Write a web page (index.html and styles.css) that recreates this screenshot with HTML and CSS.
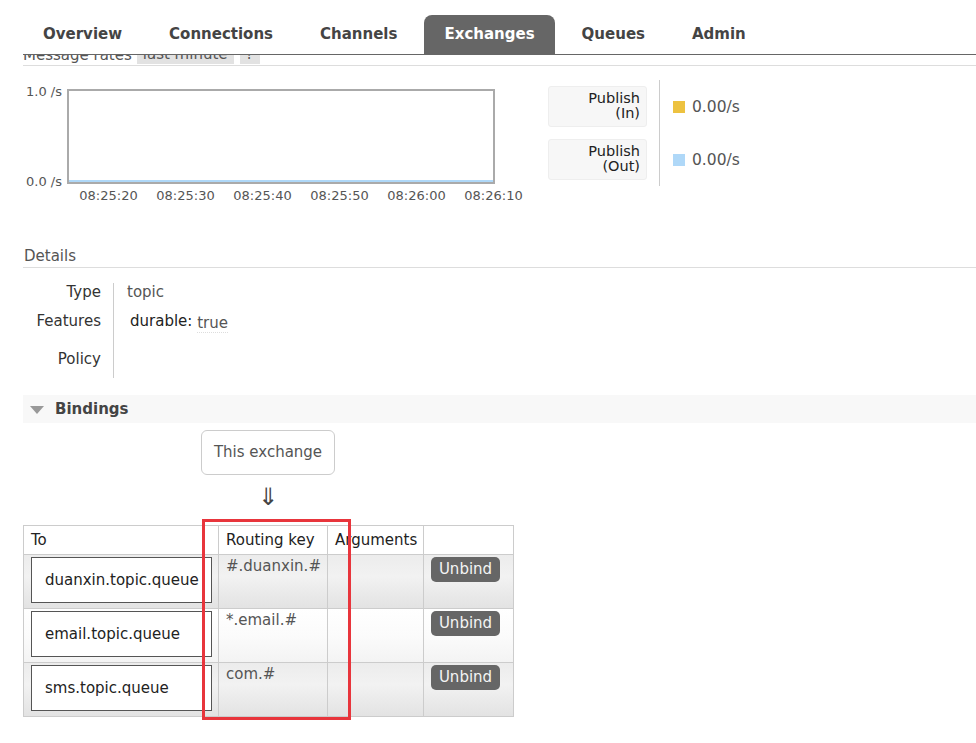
FILE: index.html
```html
<!DOCTYPE html>
<html>
<head>
<meta charset="utf-8">
<link rel="stylesheet" href="styles.css">
</head>
<body>
<div class="nav">
  <div class="tab">Overview</div>
  <div class="tab">Connections</div>
  <div class="tab">Channels</div>
  <div class="tab active">Exchanges</div>
  <div class="tab">Queues</div>
  <div class="tab">Admin</div>
</div>
<div class="main">
  <div class="rates-head">
    <div class="rates-head-inner">
      <span class="rh-title">Message rates</span>
      <span class="rh-chip rh-range">last minute</span>
      <span class="rh-chip rh-q">?</span>
    </div>
  </div>
  <div class="rates-body">
    <div class="chart">
      <div class="ylabels"><span>1.0 /s</span><span>0.0 /s</span></div>
      <div class="plot"><div class="plot-line"></div></div>
      <div></div>
      <div class="xlabels">
        <span>08:25:20</span><span>08:25:30</span><span>08:25:40</span><span>08:25:50</span><span>08:26:00</span><span>08:26:10</span>
      </div>
    </div>
    <div class="legend">
      <div class="legend-labels">
        <div class="legend-box">Publish<br>(In)</div>
        <div class="legend-box">Publish<br>(Out)</div>
      </div>
      <div class="legend-values">
        <div class="legend-val"><span class="sq sq-in"></span>0.00/s</div>
        <div class="legend-val"><span class="sq sq-out"></span>0.00/s</div>
      </div>
    </div>
  </div>

  <h2 class="section-title">Details</h2>
  <div class="details">
    <div class="d-label r1">Type</div><div class="d-val r1">topic</div>
    <div class="d-label r2">Features</div><div class="d-val r2 feat"><span class="feat-key">durable:</span> <span class="feat-val">true</span></div>
    <div class="d-label r3">Policy</div><div class="d-val r3"></div>
  </div>

  <div class="bindings-bar"><span class="tri"></span><span class="bindings-title">Bindings</span></div>
  <div class="flow">
    <div class="this-ex">This exchange</div>
    <div class="arrow">⇓</div>
  </div>
  <div class="table-wrap">
    <table class="bind-table">
      <thead>
        <tr><th class="c-to">To</th><th class="c-rk">Routing key</th><th class="c-args">Arguments</th><th class="c-act"></th></tr>
      </thead>
      <tbody>
        <tr class="alt1"><td class="c-to"><div class="qbox">duanxin.topic.queue</div></td><td class="rk">#.duanxin.#</td><td></td><td class="act"><span class="btn">Unbind</span></td></tr>
        <tr class="alt2"><td class="c-to"><div class="qbox">email.topic.queue</div></td><td class="rk">*.email.#</td><td></td><td class="act"><span class="btn">Unbind</span></td></tr>
        <tr class="alt1"><td class="c-to"><div class="qbox">sms.topic.queue</div></td><td class="rk">com.#</td><td></td><td class="act"><span class="btn">Unbind</span></td></tr>
      </tbody>
    </table>
    <div class="highlight"></div>
  </div>
</div>
</body>
</html>
```
FILE: styles.css
```css
* { box-sizing: border-box; }
body {
  margin: 0;
  font-family: "DejaVu Sans", Verdana, sans-serif;
  font-size: 15px;
  color: #333;
  background: #fff;
}
.nav {
  display: flex;
  margin-left: 23px;
  padding-top: 15px;
  border-bottom: 1px solid #666;
  height: 55px;
  gap: 7px;
}
.tab {
  height: 39px;
  padding: 0 20px;
  line-height: 39px;
  font-weight: bold;
  font-size: 15px;
  color: #444;
  border-radius: 8px 8px 0 0;
}
.tab.active { background: #666; color: #fff; }
.main { padding-left: 23px; padding-bottom: 24px; }

.rates-head {
  height: 11px;
  overflow: hidden;
  border-bottom: 1px solid #ddd;
}
.rates-head-inner {
  display: flex;
  align-items: flex-end;
  margin-top: -11px;
  height: 20px;
  font-size: 15px;
  color: #555;
}
.rh-title { line-height: 18px; padding-right: 5px; }
.rh-chip { background: #e2e2e2; padding: 0 6px; line-height: 20px; }
.rh-range { margin-right: 6px; }

.rates-body { display: flex; align-items: flex-start; padding-top: 14px; }
.chart {
  margin-left: 3px;
  width: 499px;
  padding-top: 9px;
  display: grid;
  grid-template-columns: 41px 428px;
  grid-template-rows: 95px auto;
  font-size: 13px;
  color: #555;
}
.ylabels {
  display: flex;
  flex-direction: column;
  justify-content: space-between;
  margin: -4px 0 -5px;
  line-height: 14px;
}
.plot {
  border: 2px solid #aaa;
  display: flex;
  align-items: flex-end;
}
.plot-line { height: 2px; width: 100%; background: #afd8f8; }
.xlabels {
  display: flex;
  margin-left: 3px;
  margin-top: 4px;
  line-height: 16px;
}
.xlabels span { width: 77px; text-align: center; flex: none; }

.legend { display: flex; margin-left: 23px; }
.legend-labels {
  padding: 6px 12px 6px 0;
  border-right: 1px solid #ccc;
  display: flex;
  flex-direction: column;
  gap: 12px;
}
.legend-box {
  width: 99px;
  height: 41px;
  background: #f7f7f7;
  border: 1px solid #eee;
  border-radius: 3px;
  text-align: right;
  padding: 4px 6px 0 0;
  line-height: 15px;
  font-size: 14.5px;
  color: #222;
}
.legend-values {
  padding: 6px 0 6px 13px;
  display: flex;
  flex-direction: column;
  gap: 12px;
}
.legend-val {
  height: 41px;
  display: flex;
  align-items: center;
  font-size: 15.5px;
  color: #555;
}
.sq { width: 12px; height: 12px; margin-right: 7px; display: inline-block; }
.sq-in { background: #edc240; }
.sq-out { background: #afd8f8; }

.section-title {
  margin: 42px 0 0;
  font-size: 15px;
  font-weight: normal;
  color: #555;
  line-height: 20px;
  padding: 0 0 1px 1px;
  border-bottom: 1px solid #ddd;
}
.details {
  margin-top: 15px;
  display: grid;
  grid-template-columns: 91px auto;
}
.d-label {
  text-align: right;
  padding-right: 12px;
  border-right: 1px solid #ccc;
  line-height: 18px;
  color: #333;
}
.d-val { padding-left: 13px; line-height: 18px; color: #555; }
.r1 { padding-bottom: 11px; }
.r2 { padding-bottom: 19px; }
.r3 { padding-bottom: 10px; }
.feat { padding-left: 16px; }
.feat-key { color: #222; }
.feat-val {
  display: inline-block;
  line-height: 17px;
  position: relative;
  top: 2px;
  border-bottom: 1px dotted #ddd;
  color: #555;
}

.bindings-bar {
  margin-top: 17px;
  height: 28px;
  background: #f8f8f8;
  display: flex;
  align-items: center;
}
.tri {
  width: 0; height: 0;
  border-left: 7px solid transparent;
  border-right: 7px solid transparent;
  border-top: 8px solid #999;
  margin: 1px 11px 0 7px;
}
.bindings-title { font-weight: bold; font-size: 15px; color: #444; }

.flow {
  margin: 7px 0 0 178px;
  width: 134px;
  display: flex;
  flex-direction: column;
  align-items: center;
}
.this-ex {
  width: 134px;
  height: 45px;
  border: 1px solid #ccc;
  border-radius: 6px;
  text-align: center;
  line-height: 43px;
  color: #555;
}
.arrow {
  margin-top: 9px;
  font-size: 24px;
  line-height: 26px;
  color: #444;
}
.table-wrap { position: relative; margin-top: 15px; width: 490px; }
.bind-table {
  border-collapse: collapse;
  border: 1px solid #ccc;
  width: 490px;
  table-layout: fixed;
}
.bind-table th, .bind-table td {
  border: 1px solid #ccc;
  padding: 0 7px;
  text-align: left;
  font-weight: normal;
}
.bind-table th { height: 29px; color: #222; background: #fff; }
.c-to { width: 195px; }
.c-rk { width: 109px; }
.c-args { width: 96px; }
.c-act { width: 90px; }
.bind-table td { height: 54px; vertical-align: top; padding-top: 2px; }
.bind-table td.c-to { padding: 2px 6px 0 7px; }
.alt1 { background: linear-gradient(#ececec, #f2f2f2 40%, #e2e2e2); }
.alt2 { background: linear-gradient(#fff, #fbfbfb 50%, #f3f3f3); }
.qbox {
  width: 181px;
  height: 46px;
  border: 1px solid #555;
  background: #fff;
  padding-left: 13px;
  line-height: 44px;
  color: #222;
  white-space: nowrap;
}
.rk { color: #555; line-height: 19px; }
.btn {
  display: inline-block;
  width: 69px;
  height: 25px;
  background: #666;
  color: #f4f4f4;
  border-radius: 5px;
  line-height: 25px;
  text-align: center;
  font-size: 15px;
}
.act { padding-top: 2px; }
.highlight {
  position: absolute;
  left: 179px;
  top: -6px;
  width: 149px;
  height: 201px;
  border: 3px solid #e8353c;
  pointer-events: none;
}
```
